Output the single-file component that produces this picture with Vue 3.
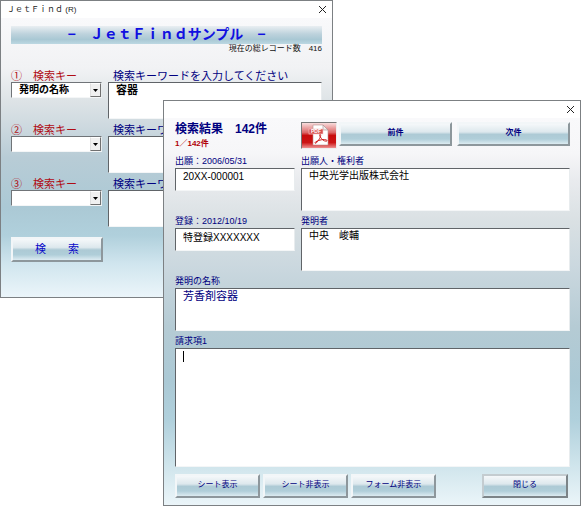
<script setup>
import { reactive } from 'vue'

const rows = reactive([
  { mark: '①', key: '発明の名称', word: '容器' },
  { mark: '②', key: '', word: '' },
  { mark: '③', key: '', word: '' }
])

const keyOptions = ['', '発明の名称']

const record = reactive({
  applicationNo: '20XX-000001',
  applicant: '中央光学出版株式会社',
  registrationNo: '特登録XXXXXXX',
  inventor: '中央　峻輔',
  name: '芳香剤容器',
  claim: ''
})
</script>

<template>
  <main class="desktop">
    <section class="window search-window">
      <header class="titlebar">
        <span>ＪｅｔＦｉｎｄ (R)</span>
        <button class="close" type="button" aria-label="閉じる">
          <svg viewBox="0 0 9 9" width="9" height="9"><path d="M1 1L8 8M8 1L1 8" /></svg>
        </button>
      </header>
      <form class="search-body" @submit.prevent>
        <h1 class="banner">−　ＪｅｔＦｉｎｄサンプル　−</h1>
        <p class="total">現在の総レコード数　416</p>
        <div class="search-rows">
          <div v-for="(row, i) in rows" :key="i" class="search-row">
            <div class="field">
              <label class="key-label" :for="'key' + i">{{ row.mark }}　検索キー</label>
              <div class="combo">
                <select :id="'key' + i" v-model="row.key">
                  <option v-for="o in keyOptions" :key="o" :value="o">{{ o }}</option>
                </select>
                <span class="arrow"><svg viewBox="0 0 5 3" width="5" height="3"><path d="M0 0H5L2.5 3Z" /></svg></span>
              </div>
            </div>
            <div class="field">
              <label class="word-label" :for="'word' + i">検索キーワードを入力してください</label>
              <textarea :id="'word' + i" v-model="row.word" class="box word"></textarea>
            </div>
          </div>
        </div>
        <button class="btn search-btn" type="submit">検　　索</button>
      </form>
    </section>

    <section class="window result-window">
      <header class="titlebar">
        <span></span>
        <button class="close" type="button" aria-label="閉じる">
          <svg viewBox="0 0 9 9" width="9" height="9"><path d="M1 1L8 8M8 1L1 8" /></svg>
        </button>
      </header>
      <form class="result-body" @submit.prevent>
        <div class="columns head">
          <div>
            <h2 class="result-title">検索結果　142件</h2>
            <p class="position">1／142件</p>
          </div>
          <div class="nav">
            <button class="pdf" type="button" aria-label="PDF">
              <svg viewBox="0 0 34 25" width="34" height="25">
                <defs>
                  <linearGradient id="red" x1="0" y1="0" x2="0" y2="1">
                    <stop offset="0" stop-color="#f8dcdc" />
                    <stop offset="0.38" stop-color="#dc6868" />
                    <stop offset="0.5" stop-color="#c80c0c" />
                    <stop offset="0.78" stop-color="#cc1414" />
                    <stop offset="1" stop-color="#ee9090" />
                  </linearGradient>
                </defs>
                <rect width="34" height="25" fill="url(#red)" />
                <path d="M11 2H21L26 7V22H11Z" fill="#fff" stroke="#b89090" stroke-width="0.6" />
                <path d="M21 2V7H26Z" fill="#eee" stroke="#a88" stroke-width="0.6" />
                <rect x="7" y="6" width="14" height="5" fill="#d85050" stroke="#f4c8c8" stroke-width="0.6" />
                <text x="14" y="10.4" text-anchor="middle" font-size="5" font-weight="bold" font-family="Liberation Sans, sans-serif" fill="#fff">PDF</text>
                <path d="M18 11.5C19.6 11.5 18.4 15.4 14.4 19.8C13.4 20.9 12 19.9 14 18.7C17.6 16.6 22.4 16 24.8 17.1C26 18.2 23.4 18.9 21 17C18.4 14.9 16.8 11.8 18 11.5Z" fill="none" stroke="#cc2020" stroke-width="1" />
              </svg>
            </button>
            <div class="steps">
              <button class="btn" type="button">前件</button>
              <button class="btn" type="button">次件</button>
            </div>
          </div>
        </div>
        <div class="columns">
          <div class="field">
            <label for="appno">出願：2006/05/31</label>
            <input id="appno" v-model="record.applicationNo" class="box" type="text" />
          </div>
          <div class="field">
            <label for="applicant">出願人・権利者</label>
            <textarea id="applicant" v-model="record.applicant" class="box"></textarea>
          </div>
        </div>
        <div class="columns">
          <div class="field">
            <label for="regno">登録：2012/10/19</label>
            <input id="regno" v-model="record.registrationNo" class="box" type="text" />
          </div>
          <div class="field">
            <label for="inventor">発明者</label>
            <textarea id="inventor" v-model="record.inventor" class="box"></textarea>
          </div>
        </div>
        <div class="field">
          <label for="name">発明の名称</label>
          <textarea id="name" v-model="record.name" class="box name"></textarea>
        </div>
        <div class="field claim-field">
          <label for="claim">請求項1</label>
          <textarea id="claim" v-model="record.claim" class="box claim"></textarea>
          <span class="caret"></span>
        </div>
        <footer class="actions">
          <button class="btn" type="button">シート表示</button>
          <button class="btn" type="button">シート非表示</button>
          <button class="btn" type="button">フォーム非表示</button>
          <button class="btn close-btn" type="button">閉じる</button>
        </footer>
      </form>
    </section>
  </main>
</template>

<style>
body {
  background: #fff;
}
</style>

<style scoped>
* {
  box-sizing: border-box;
  margin: 0;
}

.desktop {
  position: relative;
  min-height: 100vh;
  font-family: "Liberation Sans", "Noto Sans CJK JP", sans-serif;
  color: #000080;
}

.window {
  position: absolute;
  border: 1px solid #7c8083;
  background: #fff;
}

.search-window {
  top: 0;
  left: 0;
  width: 333px;
}

.result-window {
  top: 100px;
  left: 163px;
  right: 0;
}

.titlebar {
  display: flex;
  align-items: center;
  justify-content: space-between;
  height: 17px;
  padding: 0 5px 0 6px;
  font-size: 8px;
  line-height: 16px;
  color: #222;
}

.close {
  display: flex;
  padding: 0;
  border: 0;
  background: none;
}

.close path {
  fill: none;
  stroke: #222;
  stroke-width: 1;
}

.search-body {
  padding: 8px 10px 35px;
  background: linear-gradient(#f9f9fb 0%, #f1f2f4 18%, #dde3e6 30%, #cfdae0 38%, #b8ccd6 50%, #abc9d5 68%, #b0d0dc 78%, #d0e5ee 88%, #ebf5fa 100%);
}

.banner {
  height: 18px;
  background: linear-gradient(#e9eef2 0%, #bdd2dc 45%, #a9c8d4 75%, #bcd8e2 100%);
  font-size: 14px;
  line-height: 16px;
  text-align: center;
  white-space: nowrap;
  color: #1010e0;
}

.total {
  height: 26px;
  font-size: 8px;
  line-height: 10px;
  text-align: right;
  color: #111;
}

.search-rows {
  display: grid;
  gap: 5px;
}

.search-row {
  display: grid;
  grid-template-columns: 91px 1fr;
  gap: 6px;
}

.field {
  display: flex;
  flex-direction: column;
}

.field label {
  height: 13px;
  font-size: 9px;
  line-height: 12px;
  white-space: nowrap;
}

.search-row label {
  height: 12px;
  font-size: 11px;
}

.search-row .key-label {
  color: #b00c14;
}

.search-row .word-label {
  padding-left: 5px;
}

.box {
  display: block;
  width: 100%;
  padding: 0 7px;
  border: 1px solid;
  border-color: #606468 #e8ecee #f4f6f7 #606468;
  border-radius: 0;
  outline: 0;
  background: #fff;
  resize: none;
  overflow: hidden;
  font-family: inherit;
  font-size: 10px;
  line-height: 14px;
  color: #000;
}

textarea.box {
  height: 43px;
}

textarea.word {
  height: 37px;
  font-size: 11px;
  font-weight: bold;
}

input.box {
  height: 23px;
  padding-bottom: 6px;
}

textarea.name {
  font-size: 11px;
  color: #000080;
}

textarea.claim {
  height: 119px;
}

.claim-field {
  position: relative;
}

.caret {
  position: absolute;
  top: 16px;
  left: 8px;
  width: 1px;
  height: 11px;
  background: #000;
}

.combo {
  display: grid;
  height: 16px;
  border: 1px solid;
  border-color: #707478 #e8ecee #f4f6f7 #707478;
  background: #fff;
}

.combo select {
  grid-area: 1 / 1;
  width: 100%;
  padding: 0 0 0 7px;
  border: 0;
  outline: 0;
  appearance: none;
  background: none;
  font-family: inherit;
  font-size: 10px;
  font-weight: bold;
  line-height: 14px;
  color: #000;
}

.arrow {
  grid-area: 1 / 1;
  justify-self: end;
  display: flex;
  align-items: center;
  justify-content: center;
  width: 11px;
  border: 1px solid;
  border-color: #fff #707070 #707070 #e0e0e0;
  background: #f0f0f0;
  pointer-events: none;
}

.btn {
  padding: 0 0 2px;
  border: 2px solid;
  border-color: #f2f6f8 #8d979c #8d979c #f2f6f8;
  background: linear-gradient(#f5f8fa 0%, #dde8ed 40%, #adcad5 52%, #b0ced9 75%, #dcebf1 100%);
  font-family: inherit;
  font-size: 8px;
  line-height: 12px;
  white-space: nowrap;
  color: #000080;
}

.search-btn {
  width: 92px;
  height: 25px;
  margin-top: 10px;
  font-size: 11px;
  color: #0808c8;
}

.result-body {
  display: grid;
  gap: 4px;
  padding: 4px 10px 7px 11px;
  background: linear-gradient(#f9f9fb 0%, #f6f6f8 9%, #e9ebee 16%, #d9e0e3 27%, #cbd8df 38%, #b5cbd4 54%, #abc9d5 68%, #b0d0dc 78%, #d0e5ec 90%, #ebf5f9 100%);
}

.columns {
  display: grid;
  grid-template-columns: 120px 1fr;
  gap: 6px;
}

.head {
  height: 29px;
}

.result-title {
  font-size: 12px;
  line-height: 14px;
  white-space: nowrap;
}

.position {
  padding-top: 2px;
  font-size: 8px;
  font-weight: bold;
  line-height: 12px;
  color: #b00008;
}

.nav {
  display: grid;
  grid-template-columns: 36px 1fr;
  align-items: start;
  column-gap: 2px;
}

.steps {
  display: grid;
  grid-template-columns: 1fr 1fr;
  column-gap: 5px;
}

.steps .btn {
  height: 24px;
  font-weight: bold;
}

.pdf {
  display: flex;
  width: 36px;
  height: 27px;
  padding: 0;
  border: 1px solid;
  border-color: #777 #eee #eee #777;
  background: none;
}

.actions {
  display: grid;
  grid-template-columns: repeat(3, 85px) 1fr;
  column-gap: 3px;
  padding: 3px 2px 0 0;
}

.actions .btn {
  height: 24px;
}

.actions .close-btn {
  justify-self: end;
  width: 86px;
  border-color: #c4ccd0 #7c8488 #7c8488 #c4ccd0;
}
</style>
